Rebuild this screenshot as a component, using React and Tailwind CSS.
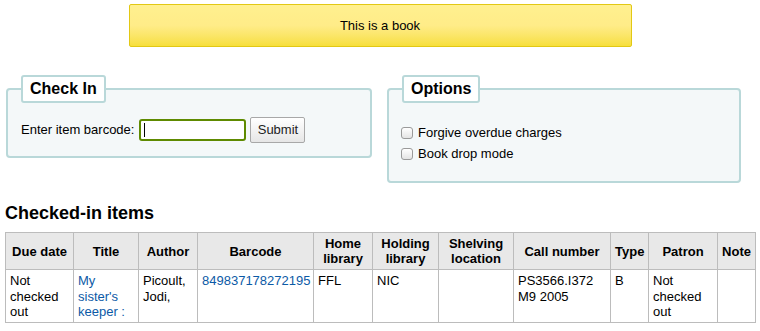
import React from 'react';

const columns = [
    { label: 'Due date', width: 'w-[68px]' },
    { label: 'Title', width: 'w-[65px]' },
    { label: 'Author', width: 'w-[59px]' },
    { label: 'Barcode', width: 'w-[116px]' },
    { label: 'Home library', width: 'w-[59px]' },
    { label: 'Holding library', width: 'w-[66px]' },
    { label: 'Shelving location', width: 'w-[75px]' },
    { label: 'Call number', width: 'w-[97px]' },
    { label: 'Type', width: 'w-[38px]' },
    { label: 'Patron', width: 'w-[69px]' },
    { label: 'Note', width: 'w-[38px]' },
];

const Checkbox = () => (
    <span className="inline-block w-[12px] h-[12px] rounded-[3px] border border-[#9a9a9a] bg-gradient-to-b from-white to-[#e4e4e4]" />
);

const Legend = ({ children }) => (
    <legend className="bg-white border-2 border-[#b9d8d9] rounded-[3px] px-[7px] py-[3px] text-[16px] leading-[18px] font-bold text-black">
        {children}
    </legend>
);

const App = () => {
    const cell = 'border border-[#bcbcbc] px-[4px]';

    return (
        <div className="w-[760px] h-[331px] bg-white text-[13px] text-black font-['Liberation_Sans',Arial,sans-serif] overflow-hidden">
            <div className="mx-auto mt-[4px] w-[503px] h-[43px] flex items-center justify-center rounded-[2px] border border-[#e2c814] bg-gradient-to-b from-[#fff08f] via-[#ffec88] to-[#f7df3a]">
                This is a book
            </div>

            <div className="flex items-start gap-[15px] mt-[28px] pl-[6px]">
                <fieldset className="w-[366px] border-2 border-[#b9d8d9] rounded-[4px] bg-[#f4f8f9] pl-[13px] pr-[10px] pt-[14px] pb-[13px]">
                    <Legend>Check In</Legend>
                    <div className="flex items-center">
                        <label className="mr-[5px]">Enter item barcode:</label>
                        <div className="relative">
                            <input className="w-[107px] h-[22px] border-2 border-[#5e8a00] rounded-[3px] bg-white outline-none px-[3px]" />
                            <span className="absolute left-[5px] top-[4px] w-[1px] h-[14px] bg-black" />
                        </div>
                        <button className="ml-[4px] w-[55px] h-[26px] border border-[#a8a8a8] rounded-[2px] bg-gradient-to-b from-white to-[#e6e6e6] text-[13px] text-[#222]">
                            Submit
                        </button>
                    </div>
                </fieldset>

                <fieldset className="w-[354px] border-2 border-[#b9d8d9] rounded-[4px] bg-[#f4f8f9] pl-[13px] pr-[10px] pt-[19px] pb-[17px]">
                    <Legend>Options</Legend>
                    <div className="flex flex-col">
                        <label className="flex items-center gap-[5px] h-[21px] -ml-[1px]">
                            <Checkbox /> Forgive overdue charges
                        </label>
                        <label className="flex items-center gap-[5px] h-[21px] -ml-[1px]">
                            <Checkbox /> Book drop mode
                        </label>
                    </div>
                </fieldset>
            </div>

            <h1 className="ml-[5px] mt-[20px] mb-[8px] text-[18px] leading-[21px] font-bold">Checked-in items</h1>

            <table className="ml-[5px] w-[750px] table-fixed border-collapse">
                <thead>
                    <tr className="bg-[#e8e8e8]">
                        {columns.map((col) => (
                            <th key={col.label} className={`${cell} ${col.width} py-[3px] leading-[15px] font-bold text-center align-middle`}>
                                {col.label}
                            </th>
                        ))}
                    </tr>
                </thead>
                <tbody className="leading-[15.5px]">
                    <tr className="align-top [&>td]:pt-[3px] [&>td]:pb-[2px]">
                        <td className={cell}>Not checked out</td>
                        <td className={`${cell} text-[#0c5aa6]`}>My sister's keeper :</td>
                        <td className={cell}>Picoult, Jodi,</td>
                        <td className={`${cell} text-[#0c5aa6]`}>849837178272195</td>
                        <td className={cell}>FFL</td>
                        <td className={cell}>NIC</td>
                        <td className={cell}></td>
                        <td className={cell}>PS3566.I372 M9 2005</td>
                        <td className={cell}>B</td>
                        <td className={cell}>Not checked out</td>
                        <td className={cell}></td>
                    </tr>
                </tbody>
            </table>
        </div>
    );
};

export default App;
